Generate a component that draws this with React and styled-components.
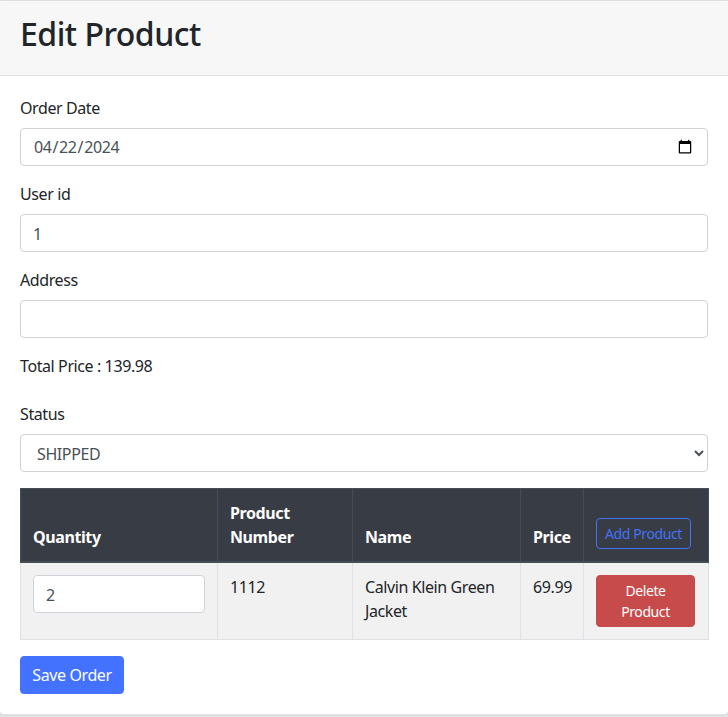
import React from "react";
import styled, { createGlobalStyle } from "styled-components";

const GlobalStyle = createGlobalStyle`
  * { box-sizing: border-box; }
  html, body { margin: 0; padding: 0; background: #dee2e2; }
  body {
    font-family: "Noto Sans", "Open Sans", sans-serif;
    font-size: 16px;
    line-height: 24px;
    letter-spacing: -0.025em;
    color: #212529;
  }
  input, select, button { letter-spacing: inherit; }
`;

const Card = styled.div`
  background: #fff;
  border-top: 1px solid #dfdfdf;
  height: 714px;
  border-radius: 4px;
`;

const CardHeader = styled.div`
  height: 75px;
  padding: 12px 20px;
  background: #f7f7f7;
  border-bottom: 1px solid #dfdfdf;
`;

const Title = styled.h1`
  margin: 0;
  font-size: 32px;
  line-height: 42px;
  font-weight: 500;
  letter-spacing: -0.5px;
  color: #212529;
`;

const CardBody = styled.form`
  padding: 20px;
`;

const Field = styled.div`
  margin-bottom: 16px;
`;

const Label = styled.label`
  display: block;
  margin-bottom: 8px;
`;

const Input = styled.input`
  display: block;
  width: 100%;
  height: 38px;
  padding: ${(props) => (props.type === "date" ? "6px 12px" : "7px 12px 5px")};
  font: inherit;
  color: #495057;
  background: #fff;
  border: 1px solid #ced4da;
  border-radius: 4px;
  outline: none;
`;

const Select = styled.select`
  display: block;
  width: 100%;
  height: 38px;
  padding: 7px 12px 5px;
  font: inherit;
  color: #495057;
  background: #fff;
  border: 1px solid #ced4da;
  border-radius: 4px;
  outline: none;
`;

const TotalPrice = styled.p`
  margin: 0 0 24px;
`;

const Table = styled.table`
  width: 100%;
  table-layout: fixed;
  border-collapse: collapse;
  margin-bottom: 16px;
`;

const HeadCell = styled.th`
  padding: 12px;
  vertical-align: bottom;
  text-align: left;
  font-weight: 700;
  color: #fff;
  background: #383c44;
  border: 1px solid #454d55;
  border-bottom-width: 2px;
`;

const Cell = styled.td`
  padding: 12px;
  vertical-align: top;
  background: #f1f1f1;
  border: 1px solid #dee2e6;
`;

const Button = styled.button`
  display: block;
  font: inherit;
  padding: 6px 12px;
  border-radius: 4px;
  cursor: pointer;
`;

const AddButton = styled(Button)`
  font-size: 14px;
  font-weight: 400;
  line-height: 21px;
  padding: 4px 8px;
  white-space: nowrap;
  color: #4272f5;
  background: transparent;
  border: 1px solid #4272f5;
`;

const DeleteButton = styled(Button)`
  width: 99px;
  font-size: 14px;
  line-height: 21px;
  padding: 4px 8px;
  color: #fff;
  background: #c84b4b;
  border: 1px solid #c84b4b;
`;

const SaveButton = styled(Button)`
  width: 104px;
  height: 38px;
  padding: 6px 0;
  color: #fff;
  background: #4272ff;
  border: 1px solid #4272ff;
`;

const columns = [197, 135, 168, 63, 125];

export default function App() {
  return (
    <>
      <GlobalStyle />
      <Card>
        <CardHeader>
          <Title>Edit Product</Title>
        </CardHeader>
        <CardBody>
          <Field>
            <Label>Order Date</Label>
            <Input type="date" defaultValue="2024-04-22" />
          </Field>
          <Field>
            <Label>User id</Label>
            <Input type="text" defaultValue="1" />
          </Field>
          <Field>
            <Label>Address</Label>
            <Input type="text" />
          </Field>
          <TotalPrice>Total Price : 139.98</TotalPrice>
          <Field>
            <Label>Status</Label>
            <Select defaultValue="SHIPPED">
              <option>PENDING</option>
              <option>SHIPPED</option>
              <option>DELIVERED</option>
            </Select>
          </Field>
          <Table>
            <colgroup>
              {columns.map((width) => (
                <col key={width} width={width} />
              ))}
            </colgroup>
            <thead>
              <tr>
                <HeadCell>Quantity</HeadCell>
                <HeadCell>Product Number</HeadCell>
                <HeadCell>Name</HeadCell>
                <HeadCell>Price</HeadCell>
                <HeadCell>
                  <AddButton type="button">Add Product</AddButton>
                </HeadCell>
              </tr>
            </thead>
            <tbody>
              <tr>
                <Cell>
                  <Input type="number" defaultValue="2" />
                </Cell>
                <Cell>1112</Cell>
                <Cell>Calvin Klein Green Jacket</Cell>
                <Cell>69.99</Cell>
                <Cell>
                  <DeleteButton type="button">Delete Product</DeleteButton>
                </Cell>
              </tr>
            </tbody>
          </Table>
          <SaveButton type="button">Save Order</SaveButton>
        </CardBody>
      </Card>
    </>
  );
}
